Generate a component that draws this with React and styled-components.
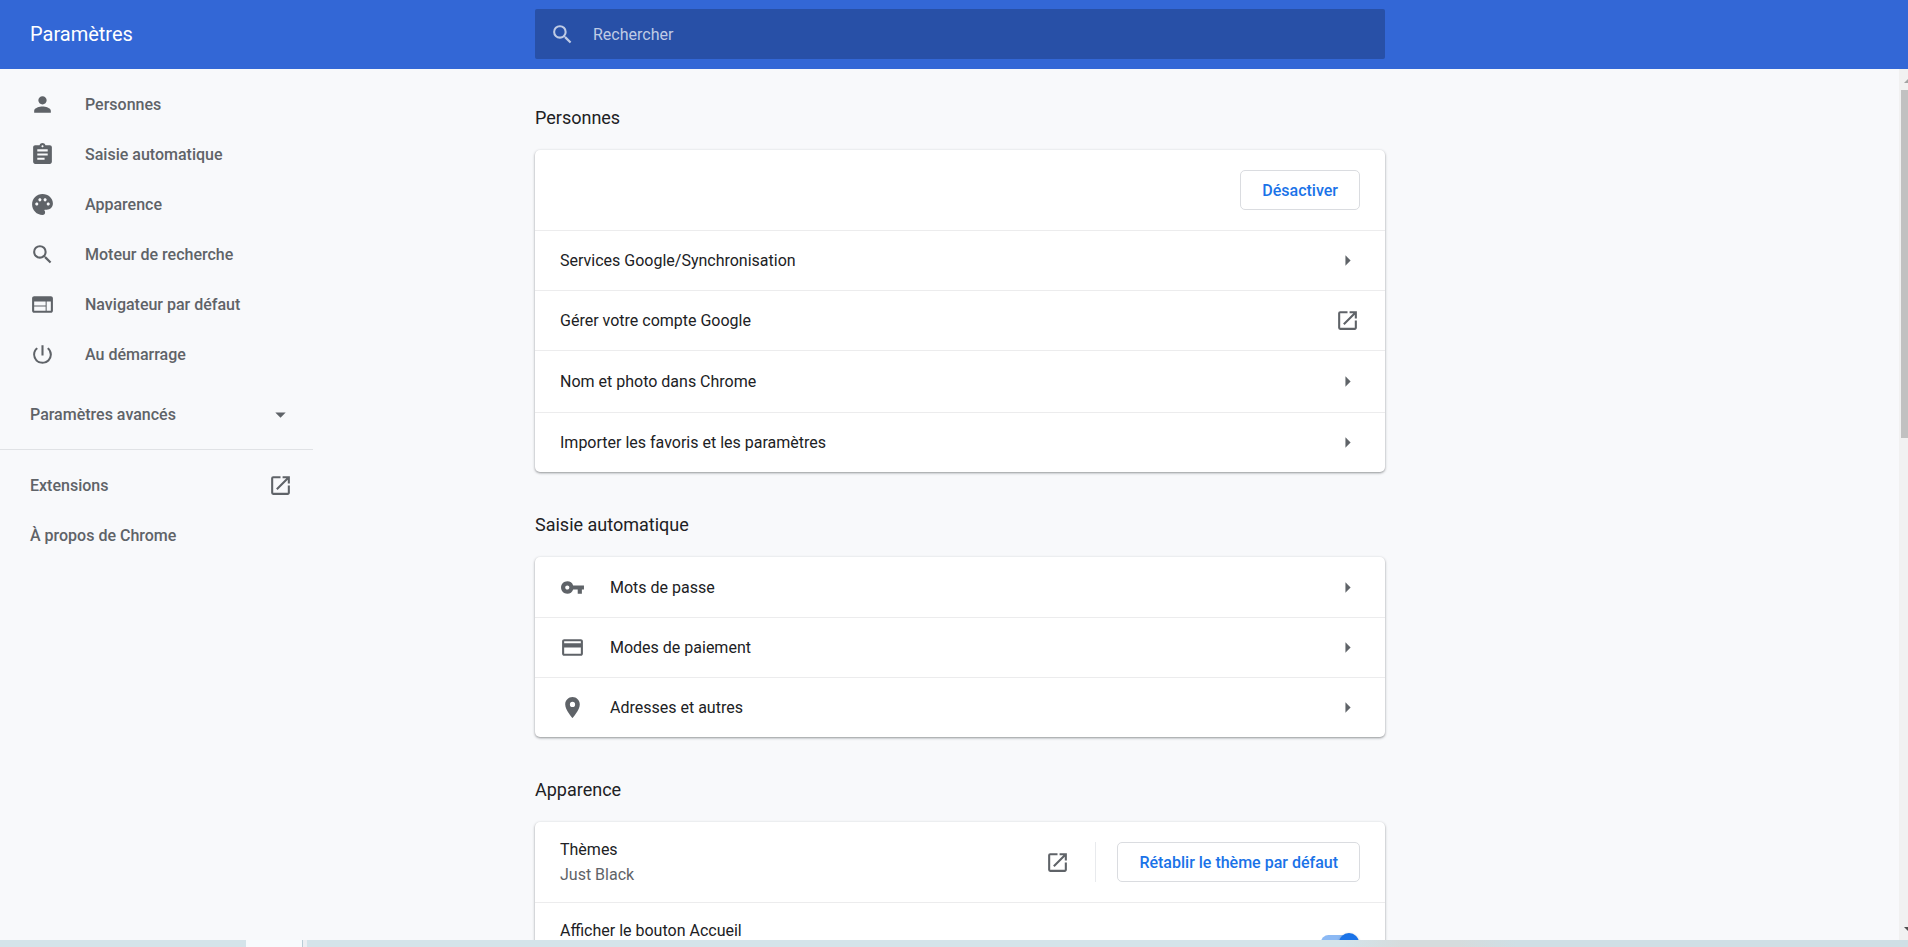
import React, { useState } from 'react';
import styled, { createGlobalStyle } from 'styled-components';
import {
  MdPerson,
  MdAssignment,
  MdPalette,
  MdSearch,
  MdWeb,
  MdPowerSettingsNew,
  MdArrowDropDown,
  MdArrowRight,
  MdOpenInNew,
  MdVpnKey,
  MdCreditCard,
  MdPlace,
} from 'react-icons/md';

const menu = [
  { label: 'Personnes', icon: MdPerson },
  { label: 'Saisie automatique', icon: MdAssignment },
  { label: 'Apparence', icon: MdPalette },
  { label: 'Moteur de recherche', icon: MdSearch },
  { label: 'Navigateur par défaut', icon: MdWeb },
  { label: 'Au démarrage', icon: MdPowerSettingsNew },
];

const peopleRows = [
  { label: 'Services Google/Synchronisation' },
  { label: 'Gérer votre compte Google', external: true },
  { label: 'Nom et photo dans Chrome', tall: true },
  { label: 'Importer les favoris et les paramètres' },
];

const autofillRows = [
  { label: 'Mots de passe', icon: MdVpnKey },
  { label: 'Modes de paiement', icon: MdCreditCard },
  { label: 'Adresses et autres', icon: MdPlace },
];

function LinkRow({ label, icon: Icon, external, tall }) {
  return (
    <RowButton type="button" $tall={tall}>
      {Icon && <RowIcon><Icon size={25} /></RowIcon>}
      <RowLabel>{label}</RowLabel>
      {external ? <MdOpenInNew size={25} color={grey} /> : <MdArrowRight size={25} color={grey} />}
    </RowButton>
  );
}

function Sidebar() {
  return (
    <Nav>
      {menu.map(({ label, icon: Icon }) => (
        <NavLink href="#" key={label}>
          <Icon size={25} />
          <NavText>{label}</NavText>
        </NavLink>
      ))}
      <AdvancedButton type="button">
        <span>Paramètres avancés</span>
        <MdArrowDropDown size={25} />
      </AdvancedButton>
      <Divider />
      <NavLink href="#" $spread>
        <span>Extensions</span>
        <MdOpenInNew size={25} />
      </NavLink>
      <NavLink href="#">À propos de Chrome</NavLink>
    </Nav>
  );
}

function App() {
  const [search, setSearch] = useState('');
  const [homeButton, setHomeButton] = useState(true);

  return (
    <>
      <GlobalStyle />
      <Page>
        <Header>
          <Title>Paramètres</Title>
          <SearchBox>
            <MdSearch size={25} />
            <SearchInput
              type="text"
              aria-label="Rechercher"
              placeholder="Rechercher"
              value={search}
              onChange={(e) => setSearch(e.target.value)}
            />
          </SearchBox>
        </Header>
        <Body>
          <Sidebar />
          <Main>
            <SectionTitle>Personnes</SectionTitle>
            <Card>
              <Row $end>
                <ActionButton type="button">Désactiver</ActionButton>
              </Row>
              {peopleRows.map((row) => <LinkRow key={row.label} {...row} />)}
            </Card>

            <SectionTitle>Saisie automatique</SectionTitle>
            <Card>
              {autofillRows.map((row) => <LinkRow key={row.label} {...row} />)}
            </Card>

            <SectionTitle>Apparence</SectionTitle>
            <Card>
              <Row>
                <Stack>
                  <span>Thèmes</span>
                  <Secondary>Just Black</Secondary>
                </Stack>
                <IconButton type="button" aria-label="Ouvrir les thèmes">
                  <MdOpenInNew size={25} />
                </IconButton>
                <Separator />
                <ActionButton type="button">Rétablir le thème par défaut</ActionButton>
              </Row>
              <Row>
                <Stack as="label" htmlFor="home">
                  <span>Afficher le bouton Accueil</span>
                </Stack>
                <Toggle
                  id="home"
                  type="checkbox"
                  checked={homeButton}
                  onChange={(e) => setHomeButton(e.target.checked)}
                />
              </Row>
            </Card>
          </Main>
          <Scrollbar>
            <ScrollArrow viewBox="0 0 21 21"><path d="M5 14 L10.500 8.500 L16 14 Z" fill="#a3a3a3" /></ScrollArrow>
            <Thumb />
            <ScrollArrow viewBox="0 0 21 21"><path d="M5 8 L10.500 13.500 L16 8 Z" fill="#505050" /></ScrollArrow>
          </Scrollbar>
        </Body>
        <Taskbar>
          <Tab />
          <TabEdge />
        </Taskbar>
      </Page>
    </>
  );
}

const grey = '#5f6368';

const GlobalStyle = createGlobalStyle`
  * {
    box-sizing: border-box;
  }
  body {
    margin: 0;
    overflow: hidden;
    background: #f8f9fb;
    color: #202124;
    font-family: Roboto, "Liberation Sans", sans-serif;
    font-size: 16px;
    line-height: 25px;
  }
  button, input {
    font: inherit;
    color: inherit;
  }
  svg {
    flex-shrink: 0;
  }
`

// the page runs a little past the right edge, under the scrollbar
const Page = styled.div`
  display: flex;
  flex-direction: column;
  width: calc(100% + 12px);
  height: 100vh;
`

const columns = 'minmax(313px, 1fr) minmax(0, 850px) minmax(21px, 1fr)'

const Header = styled.header`
  display: grid;
  grid-template-columns: ${columns};
  align-items: center;
  flex: none;
  padding: 9px 0 10px;
  background: #3367d6;
  color: white;
`

const Title = styled.h1`
  margin: 0;
  padding-left: 30px;
  font-size: 20px;
  font-weight: 400;
`

const SearchBox = styled.div`
  display: flex;
  align-items: center;
  gap: 18px;
  height: 50px;
  padding: 0 15px;
  border-radius: 2px;
  background: #2850a7;
  color: #bfcbe5;
`

const SearchInput = styled.input`
  flex: 1;
  min-width: 0;
  padding: 0;
  border: none;
  outline: none;
  background: transparent;

  &::placeholder {
    color: #bfcbe5;
    opacity: 1;
  }
`

const Body = styled.div`
  display: grid;
  grid-template-columns: ${columns};
  grid-template-rows: 100%;
  flex: 1;
  min-height: 0;
  overflow: hidden;
`

const Nav = styled.nav`
  display: flex;
  flex-direction: column;
  width: 313px;
  padding-top: 10px;
  color: ${grey};
  font-weight: 500;
`

const NavLink = styled.a`
  display: flex;
  align-items: center;
  justify-content: ${({ $spread }) => ($spread ? 'space-between' : 'flex-start')};
  flex: none;
  height: 50px;
  padding: 0 20px 0 30px;
  color: inherit;
  text-decoration: none;
`

const NavText = styled.span`
  padding-left: 30px;
`

const AdvancedButton = styled.button`
  display: flex;
  align-items: center;
  justify-content: space-between;
  flex: none;
  height: 50px;
  margin-top: 10px;
  padding: 0 20px 0 30px;
  border: none;
  background: transparent;
`

const Divider = styled.hr`
  flex: none;
  width: 100%;
  height: 1px;
  margin: 10px 0;
  border: none;
  background: #e0e2e5;
`

const Main = styled.main`
  min-width: 0;
  padding-top: 21px;
`

const SectionTitle = styled.h2`
  margin: 0;
  padding: 15px 0 20px;
  font-size: 18px;
  font-weight: 400;
  line-height: 25px;
`

const Card = styled.section`
  margin-bottom: 25px;
  border-radius: 5px;
  background: white;
  box-shadow: 0 1px 3px rgba(60, 64, 67, 0.3), 0 1px 2px rgba(60, 64, 67, 0.3);
`

const Row = styled.div`
  display: flex;
  align-items: center;
  justify-content: ${({ $end }) => ($end ? 'flex-end' : 'flex-start')};
  height: 80px;
  padding: 0 25px;

  & + & {
    border-top: 1px solid #ececed;
  }
`

const RowButton = styled.button`
  display: flex;
  align-items: center;
  width: 100%;
  height: ${({ $tall }) => ($tall ? '62px' : '60px')};
  padding: 0 25px;
  border: none;
  background: transparent;
  text-align: left;

  &:not(:first-child) {
    border-top: 1px solid #ececed;
  }
`

const RowIcon = styled.span`
  display: flex;
  padding-right: 25px;
  color: ${grey};
`

const RowLabel = styled.span`
  flex: 1;
`

const Stack = styled.div`
  display: flex;
  flex: 1;
  flex-direction: column;
  min-height: 50px;
`

const Secondary = styled.span`
  color: ${grey};
`

const ActionButton = styled.button`
  height: 40px;
  padding: 0 21px;
  border: 1px solid #dadce0;
  border-radius: 5px;
  background: white;
  color: #1a73e8;
  font-weight: 500;
`

const IconButton = styled.button`
  display: flex;
  padding: 0;
  border: none;
  background: transparent;
  color: ${grey};
`

const Separator = styled.span`
  width: 1px;
  height: 40px;
  margin: 0 21px 0 25px;
  background: #e8eaed;
`

const Toggle = styled.input`
  display: flex;
  align-items: center;
  width: 35px;
  height: 15px;
  margin: 0 4px;
  border-radius: 8px;
  appearance: none;
  background: ${({ checked }) => (checked ? '#8cb9f4' : '#bdc1c6')};

  &::before {
    content: '';
    flex: none;
    width: 20px;
    height: 20px;
    margin-left: ${({ checked }) => (checked ? '18px' : '-3px')};
    border-radius: 50%;
    background: ${({ checked }) => (checked ? '#1a73e8' : 'white')};
    box-shadow: 0 1px 3px rgba(0, 0, 0, 0.3);
  }
`

const Scrollbar = styled.div`
  display: flex;
  flex-direction: column;
  justify-self: end;
  width: 21px;
  background: #f1f1f1;
`

const ScrollArrow = styled.svg`
  width: 21px;
  height: 21px;
`

const Thumb = styled.div`
  height: 40%;
  margin: 0 2px auto;
  background: #c1c1c1;
`

const Taskbar = styled.footer`
  display: flex;
  flex: none;
  height: 7px;
  padding-left: 246px;
  background: linear-gradient(to right, #d4e4ea 70%, #d5dcdd 73%, #d5dcdd 76%, #cfdfe5 79%);
`

const Tab = styled.div`
  width: 56px;
  background: #f7fbfd;
`

const TabEdge = styled.div`
  width: 5px;
  border-left: 1px solid #b8ccd6;
  background: #eceff3;
`

export default App;
